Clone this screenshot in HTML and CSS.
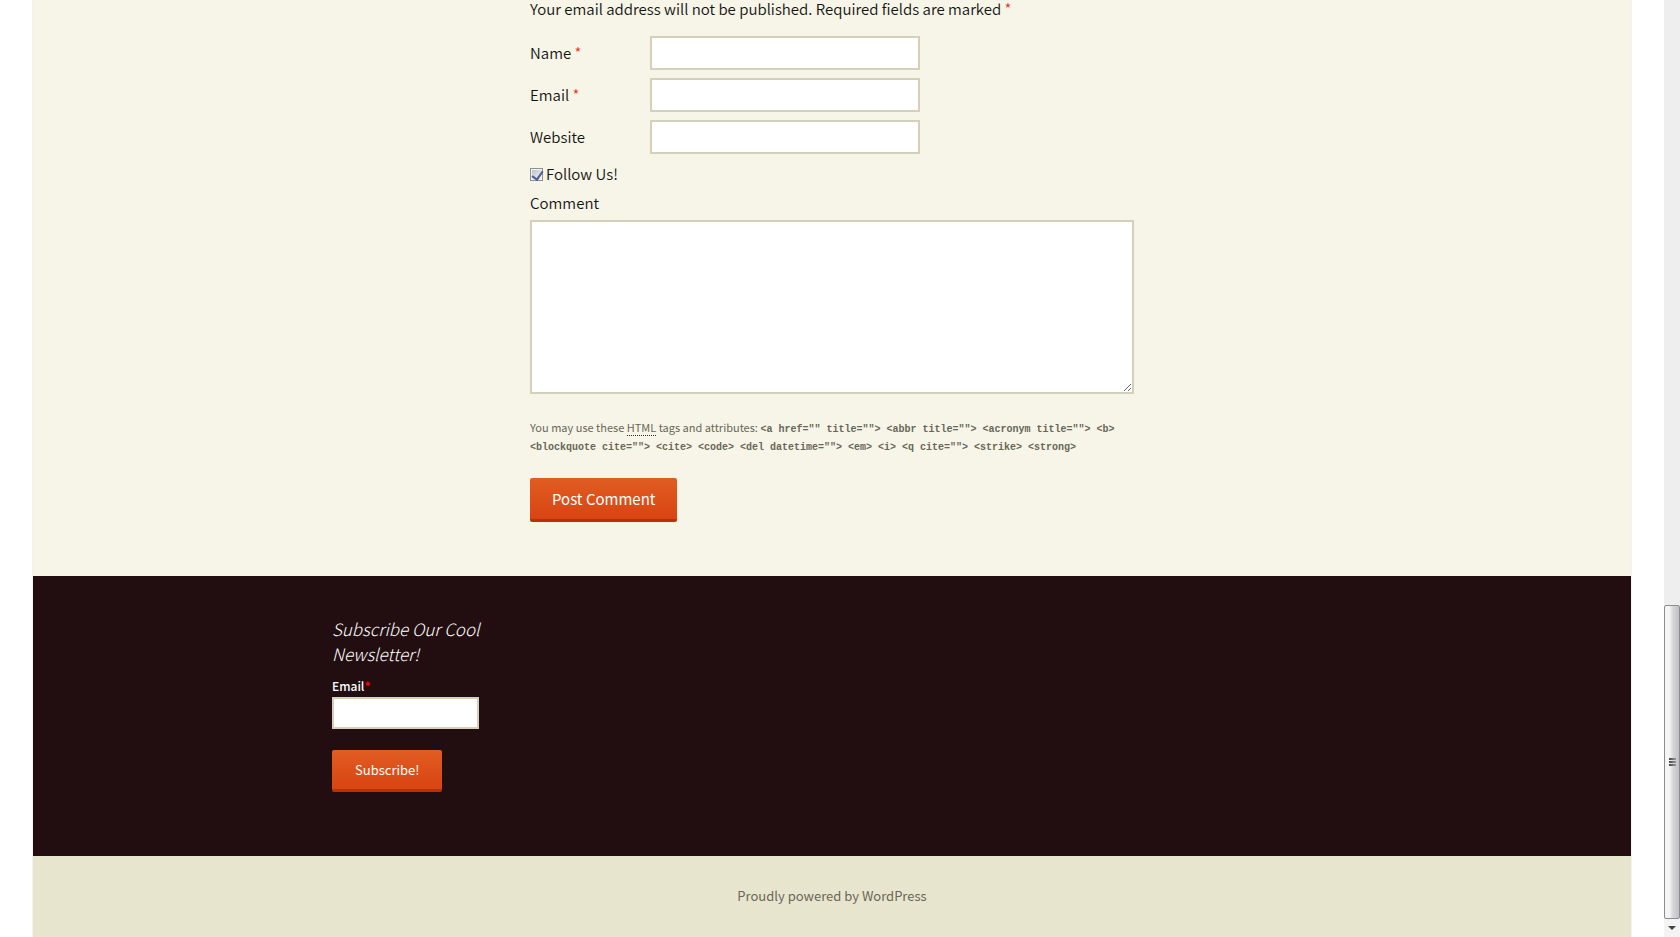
FILE: index.html
```html
<!DOCTYPE html>
<html lang="en">

<head>
    <meta charset="utf-8">
    <meta name="viewport" content="width=device-width, initial-scale=1.0">
    <title></title>
    <link rel="stylesheet" href="styles.css">
</head>

<body>
    <div class="viewport">
        <div class="site">
            <main class="content">
                <form class="comment-form">
                    <p class="comment-notes">Your email address will not be published. Required fields are marked <span class="required">*</span></p>
                    <p class="field">
                        <label for="author">Name <span class="required">*</span></label>
                        <input id="author" name="author" type="text">
                    </p>
                    <p class="field">
                        <label for="email">Email <span class="required">*</span></label>
                        <input id="email" name="email" type="email">
                    </p>
                    <p class="field">
                        <label for="url">Website</label>
                        <input id="url" name="url" type="url">
                    </p>
                    <p class="follow">
                        <input id="follow" name="follow" type="checkbox" checked>
                        <label for="follow">Follow Us!</label>
                    </p>
                    <p class="comment-text">
                        <label for="comment">Comment</label>
                        <textarea id="comment" name="comment"></textarea>
                    </p>
                    <p class="allowed-tags">You may use these <abbr>HTML</abbr> tags and attributes: <code>&lt;a href="" title=""&gt; &lt;abbr title=""&gt; &lt;acronym title=""&gt; &lt;b&gt; &lt;blockquote cite=""&gt; &lt;cite&gt; &lt;code&gt; &lt;del datetime=""&gt; &lt;em&gt; &lt;i&gt; &lt;q cite=""&gt; &lt;strike&gt; &lt;strong&gt;</code></p>
                    <button class="button" type="submit">Post Comment</button>
                </form>
            </main>

            <footer>
                <div class="widgets">
                    <div class="widget-area">
                        <form class="widget">
                            <h3>Subscribe Our Cool Newsletter!</h3>
                            <label for="subscribe">Email<span class="star">*</span></label>
                            <input id="subscribe" name="subscribe" type="email">
                            <button class="button small" type="submit">Subscribe!</button>
                        </form>
                    </div>
                </div>
                <div class="site-info">
                    <a href="#">Proudly powered by WordPress</a>
                </div>
            </footer>
        </div>
    </div>

    <div class="scrollbar" aria-hidden="true">
        <div class="thumb"><i></i><i></i><i></i></div>
        <div class="arrow"><svg width="8" height="4" viewBox="0 0 8 4"><path d="M0 0h8L4 4z" fill="#444"/></svg></div>
    </div>
</body>

</html>
```
FILE: styles.css
```css
* {
    box-sizing: border-box;
}

body {
    display: flex;
    min-height: 100vh;
    margin: 0;
    background-color: #fff;
    color: #141412;
    font-family: "Noto Sans CJK SC", sans-serif;
    font-size: 15px;
    font-weight: 350;
    line-height: 24px;
}

p,
h3 {
    margin: 0;
}

input,
textarea {
    border: 2px solid #d4d0ba;
    background-color: #fff;
    font-family: inherit;
    font-size: 15px;
    padding: 5px;
}

.viewport {
    display: flex;
    flex: 1;
    justify-content: center;
}

.site {
    display: flex;
    flex-direction: column;
    width: 100%;
    max-width: 1600px;
    margin: 0 32px;
    border-left: 1px solid #f2f2f2;
    border-right: 1px solid #f2f2f2;
}

/* comment form */
.content {
    background-color: #f7f5e7;
    padding-bottom: 54px;
}

.comment-form {
    max-width: 604px;
    margin: 0 auto;
}

.comment-notes {
    padding-bottom: 15px;
    margin-top: -3px;
}

.required {
    color: #ed331c;
}

.field {
    display: flex;
    align-items: center;
    margin-bottom: 8px;
}

.field label {
    width: 120px;
}

.field input {
    width: 270px;
    height: 34px;
}

.follow {
    display: flex;
    align-items: center;
    gap: 3px;
}

.follow input {
    appearance: none;
    position: relative;
    width: 13px;
    height: 13px;
    margin: 0;
    padding: 0;
    border: 1px solid #8e8f8f;
    background: linear-gradient(135deg, #b9bfc9, #f4f4f6);
    box-shadow: inset 0 0 0 1px #f4f4f4;
}

.follow input:checked::after {
    content: "";
    position: absolute;
    left: 3px;
    top: 0;
    width: 5px;
    height: 9px;
    border: solid #4a5f97;
    border-width: 0 2px 2px 0;
    transform: rotate(35deg);
}

.comment-text {
    display: flex;
    flex-direction: column;
    gap: 5px;
    padding-top: 5px;
}

.comment-text textarea {
    height: 174px;
}

.allowed-tags {
    margin: 24px 0;
    color: #686758;
    font-size: 11px;
    font-weight: 400;
    line-height: 18px;
}

.allowed-tags abbr {
    border-bottom: 1px dotted #2b2b2b;
}

.allowed-tags code {
    font-family: "Liberation Mono", monospace;
    font-size: 10px;
    font-weight: bold;
    line-height: 10px;
}

.button {
    display: block;
    height: 44px;
    padding: 0 22px;
    border: none;
    border-bottom: 3px solid #b93207;
    border-radius: 2px;
    background: linear-gradient(#e05d22, #d94412);
    color: #fff;
    font-family: inherit;
    font-size: 15px;
    font-weight: 400;
}

.button.small {
    height: 42px;
    padding: 0 23px;
    font-size: 13px;
}

/* footer */
footer {
    flex: 1;
    background-color: #e8e5ce;
}

.widgets {
    background-color: #220e10;
    padding: 40px 0 64px;
}

.widget-area {
    max-width: 1040px;
    margin: 0 auto;
    padding: 0 20px;
}

.widget {
    width: 160px;
    color: #fff;
    font-size: 12px;
    font-weight: 500;
}

.widget h3 {
    margin-bottom: 9px;
    font-size: 17px;
    font-style: italic;
    font-weight: 300;
    line-height: 25px;
}

.widget label {
    display: block;
    line-height: 22px;
}

.widget input {
    display: block;
    width: 147px;
    height: 32px;
    margin-bottom: 21px;
}

.star {
    color: #f00;
    font-weight: bold;
}

.site-info {
    padding: 28px 20px;
    text-align: center;
    font-size: 13px;
    font-weight: 400;
}

.site-info a {
    color: #686758;
    text-decoration: none;
}

/* scrollbar */
.scrollbar {
    display: flex;
    flex-direction: column;
    justify-content: flex-end;
    width: 16px;
    background-color: #eee;
}

.thumb {
    display: flex;
    flex-direction: column;
    align-items: center;
    justify-content: center;
    gap: 1px;
    height: 314px;
    border: 1px solid #8c8c8c;
    border-radius: 2px;
    background: linear-gradient(to right, #f5f5f5 30%, #d5d5d9 60%, #c0c0c5);
}

.thumb i {
    width: 7px;
    height: 2px;
    background: linear-gradient(to right, #444, #999);
}

.arrow {
    display: flex;
    align-items: center;
    justify-content: center;
    height: 18px;
    background-color: #f4f4f4;
}
```
